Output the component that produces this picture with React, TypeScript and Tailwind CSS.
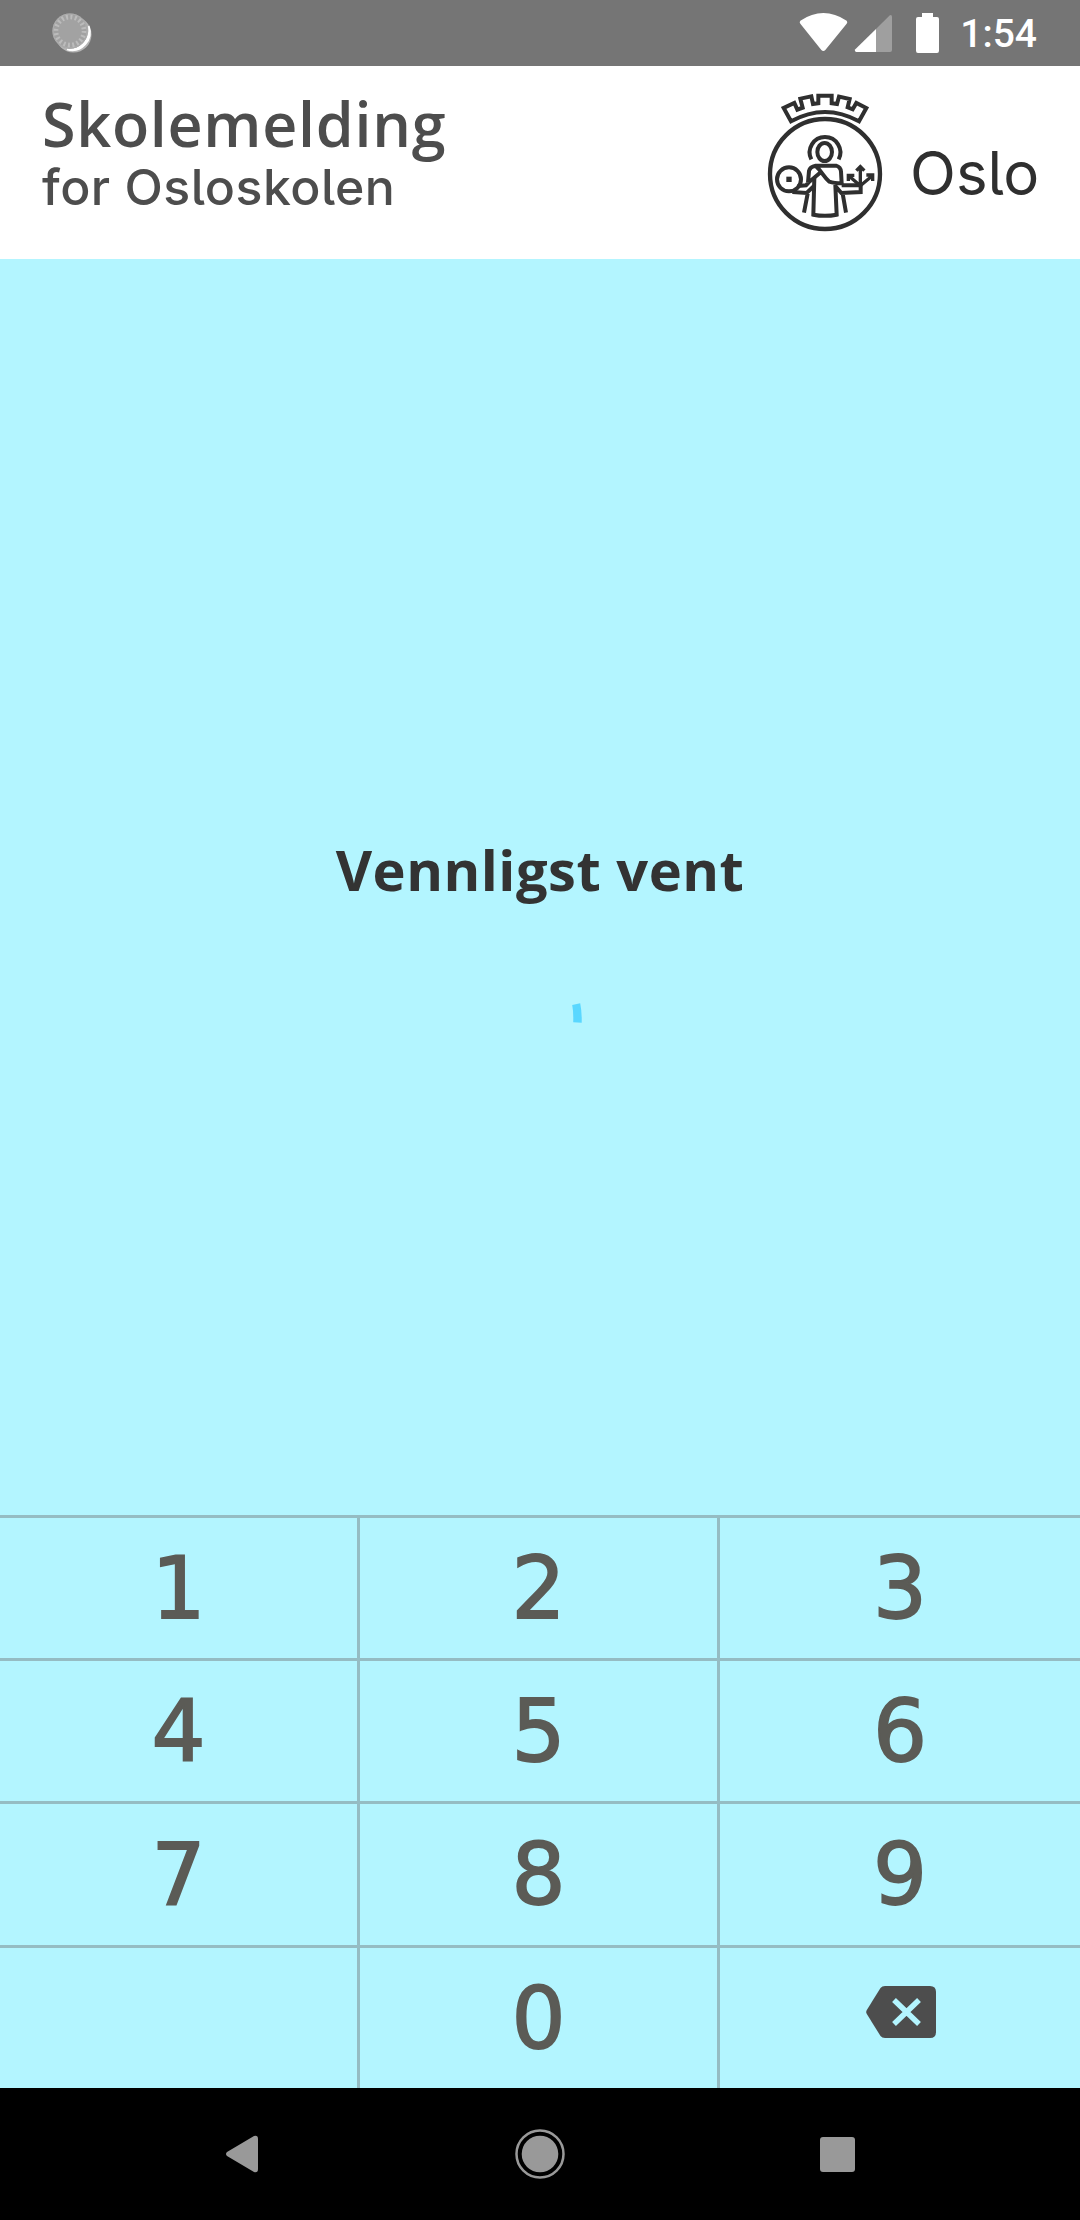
import React from "react";

function StatusBar() {
  return (
    <div className="flex h-[66px] shrink-0 items-center justify-between bg-[#757575] pr-[43px] pl-[50px]">
      <svg width="44" height="44" viewBox="0 0 44 44">
        <circle cx="23.5" cy="23.5" r="18" fill="#b4b4b4" />
        <path d="M38.8 15A18 18 0 0 1 17 38.6A20 20 0 0 0 38.8 15Z" fill="#fff" stroke="#fff" strokeWidth="1.6" />
        <circle cx="20" cy="20" r="17.5" fill="#a2a2a2" />
        <circle cx="20" cy="20" r="14.2" fill="none" stroke="#bcbcbc" strokeWidth="5" strokeDasharray="2 2.46" />
        <circle cx="20" cy="20" r="17" fill="none" stroke="#acacac" strokeWidth="1.2" />
      </svg>
      <div className="flex items-center">
        <svg width="160" height="66" viewBox="0 0 480 198" fill="#fff">
          <path d="M61 62Q130 16 200 62Q204 66 200 71L136 150Q130 156 124 150L61 71Q57 66 61 62Z" />
          <path d="M332 45Q336 45 336 50V150Q336 156 330 156H288V87L328 47Z" fill="#9f9f9f" />
          <path d="M288 87V156H229Q222 154 226 148Z" />
          <path d="M426 39H459V51H471Q477 51 477 57V152Q477 159 471 159H414Q408 159 408 152V57Q408 51 414 51H426Z" />
        </svg>
        <span className="mt-[2px] ml-[20px] font-['Roboto',sans-serif] text-[39px] leading-[68px] font-medium text-white">1:54</span>
      </div>
    </div>
  );
}

function Emblem() {
  return (
    <svg width="130" height="150" viewBox="0 0 390 450" fill="none" stroke="#2f2f2f" strokeWidth="12">
      <circle cx="195" cy="267" r="165" strokeWidth="13" />
      <path d="M93 109L71 69L103 54L112 74L128 68L121 41L154 34L159 57L175 55V32H215V55L231 57L237 35L269 42L263 67L278 73L289 54L319 69L297 109Q195 53 93 109Z" />
      <path d="M154 223A46 46 0 1 1 236 223" />
      <ellipse cx="194" cy="201" rx="22" ry="27" />
      <circle cx="87" cy="283" r="36" />
      <rect x="79" y="275" width="16" height="16" fill="#2f2f2f" stroke="none" />
      <path d="M144 292L147 258Q150 245 167 242H228Q242 246 243 260L245 295Q222 295 208 290C190 275 188 262 168 244M184 260L146 292L138 301L113 303M97 321L140 324L162 303M143 326L132 383" />
      <path d="M163 278L160 389Q195 396 230 389L226 300M226 303L244 324L302 321V301H245M248 326L258 383" />
      <path d="M301 300V247M289 257L301 245L313 257M301 302L266 272M265 288V271H283M301 302L337 272M319 270H338V288" strokeWidth="10" />
    </svg>
  );
}

function Header() {
  return (
    <header className="flex h-[193px] shrink-0 justify-between bg-white pl-[42px] font-['Inter',sans-serif]">
      <div className="flex flex-col pt-[24px] font-medium whitespace-nowrap text-[#4d4d4d]">
        <h1 className="font-['Open_Sans',sans-serif] text-[61px] leading-[67px] font-semibold tracking-[0.7px]">Skolemelding</h1>
        <p className="text-[50px] leading-[60px] tracking-[0.5px] [font-feature-settings:'cv05']">for Osloskolen</p>
      </div>
      <div className="flex w-[320px] pt-[19px]">
        <Emblem />
        <span className="mt-[54px] ml-[20px] text-[60px] leading-[68px] text-[#2f2f2f] [font-feature-settings:'cv05']">Oslo</span>
      </div>
    </header>
  );
}

function Key({ children, last }: { children?: React.ReactNode; last?: boolean }) {
  return (
    <div className={`flex items-start justify-center border-t-3 border-[#95bcc3] pt-[29px] ${last ? "" : "border-r-3"}`}>
      {children}
    </div>
  );
}

function Digit({ children }: { children: React.ReactNode }) {
  return (
    <span className="font-['DejaVu_Sans',sans-serif] text-[85px] leading-[84px] text-[#5b5b56] [-webkit-text-stroke:1.8px_#5b5b56]">
      {children}
    </span>
  );
}

function Keypad() {
  return (
    <div className="grid h-[573px] shrink-0 grid-cols-3 grid-rows-[143px_143px_144px_143px]">
      {["1", "2", "3", "4", "5", "6", "7", "8", "9"].map((d, i) => (
        <Key key={d} last={i % 3 === 2}>
          <Digit>{d}</Digit>
        </Key>
      ))}
      <Key />
      <Key>
        <Digit>0</Digit>
      </Key>
      <Key last>
        <svg className="mt-[9px] ml-[2px]" width="70" height="52" viewBox="0 0 70 52">
          <path d="M19 0H64Q70 0 70 6V46Q70 52 64 52H19Q16 52 14.500 50L.8 28Q-.4 26 .8 24L14.500 2Q16 0 19 0Z" fill="#4d4d4d" />
          <path d="M28 14L53 38M53 14L28 38" stroke="#b3f5ff" strokeWidth="5.500" />
        </svg>
      </Key>
    </div>
  );
}

export default function App() {
  return (
    <div className="flex h-[2220px] w-[1080px] flex-col overflow-hidden bg-[#b3f5ff]">
      <StatusBar />
      <Header />
      <main className="flex flex-1 flex-col items-center pt-[575px]">
        <p className="font-['Open_Sans',sans-serif] text-[56px] leading-[70px] font-bold tracking-[0.5px] text-[#333]">Vennligst vent</p>
        <svg className="mt-[75px]" width="90" height="90" viewBox="495 979 90 90">
          <path d="M572.200 1005L580.200 1003.300Q582 1012 581.700 1022.800L573.200 1022.200Q573.600 1012 572.200 1005Z" fill="#5ad7ff" />
        </svg>
      </main>
      <Keypad />
      <nav className="flex h-[132px] shrink-0 items-center justify-between bg-black px-[225px]">
        <svg width="34" height="38" viewBox="0 0 34 38">
          <path d="M2 17L29 1Q33 0 33 4V34Q33 38 29 37L2 21Q0 19 2 17Z" fill="#999" />
        </svg>
        <svg width="50" height="50" viewBox="0 0 50 50">
          <circle cx="25" cy="25" r="23.500" fill="none" stroke="#999" strokeWidth="2.500" />
          <circle cx="25" cy="25" r="18.300" fill="#999" />
        </svg>
        <div className="h-[35px] w-[35px] rounded-[3px] bg-[#999]" />
      </nav>
    </div>
  );
}
